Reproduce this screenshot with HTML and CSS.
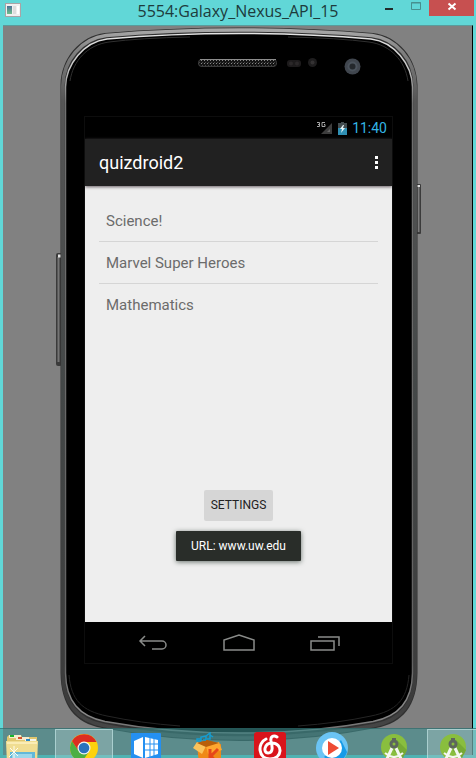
FILE: index.html
```html
<!DOCTYPE html>
<html lang="en">
<head>
<meta charset="utf-8">
<meta name="viewport" content="width=device-width, initial-scale=1">
<title>5554:Galaxy_Nexus_API_15</title>
<link rel="stylesheet" href="styles.css">
</head>
<body>
<header class="titlebar">
  <svg class="app-icon" width="16" height="14" viewBox="0 0 16 14" aria-hidden="true">
    <defs><linearGradient id="pane" x1="0" y1="0" x2="0" y2="1"><stop offset="0" stop-color="#4a7196"/><stop offset="1" stop-color="#6fc08c"/></linearGradient></defs>
    <rect x=".5" y=".5" width="15" height="13" fill="#f0f0f0" stroke="#a9a3a6"/>
    <rect x="2" y="3" width="5" height="8" fill="url(#pane)"/>
    <rect x="8" y="3" width="3" height="8" fill="#ddd"/><rect x="12" y="3" width="2" height="8" fill="#fff"/>
  </svg>
  <h1 class="window-title">5554:Galaxy_Nexus_API_15</h1>
  <div class="window-controls">
    <button class="control" aria-label="Minimize"><svg width="10" height="16" viewBox="0 0 10 16"><path d="M1 9h8" stroke="#222b2b" stroke-width="2"/></svg></button>
    <button class="control" aria-label="Maximize"><svg width="10" height="16" viewBox="0 0 10 16"><path d="M.5 2.500h9v7h-9zM0 3h10" fill="none" stroke="#47908f"/></svg></button>
    <button class="control control-close" aria-label="Close"><svg width="10" height="16" viewBox="0 0 10 16"><path d="M1.500 3.500l7 6M8.500 3.500l-7 6" stroke="#fff" stroke-width="2"/></svg></button>
  </div>
</header>

<main class="stage">
  <div class="phone">
    <svg class="phone-body" width="366" height="716" viewBox="56 26 366 716" aria-hidden="true">
      <defs>
        <linearGradient id="rim" x1="0" y1="0" x2="0" y2="1">
          <stop offset="0" stop-color="#a8a8a8"/><stop offset=".03" stop-color="#808080"/><stop offset=".1" stop-color="#565656"/><stop offset=".5" stop-color="#444848"/><stop offset=".95" stop-color="#3c3c3c"/><stop offset="1" stop-color="#4a4a4a"/>
        </linearGradient>
        <linearGradient id="shine" x1="0" y1="0" x2="0" y2="1">
          <stop offset="0" stop-color="#e4e4e4"/><stop offset=".05" stop-color="#c4c4c4"/><stop offset=".1" stop-color="#707070"/><stop offset=".9" stop-color="#626262"/><stop offset=".97" stop-color="#8c8c8c"/><stop offset="1" stop-color="#6c6c6c"/>
        </linearGradient>
        <pattern id="mesh" width="3" height="3" patternUnits="userSpaceOnUse"><rect width="3" height="3" fill="#151515"/><rect width="1" height="1" fill="#888"/><rect x="1" y="2" width="1" height="1" fill="#444"/></pattern>
      </defs>
      <rect x="56" y="253" width="6" height="113" rx="2" fill="#3b3b3b"/><path d="M58.500 257v105" stroke="#757575" stroke-width="2"/><path d="M58 256h3" stroke="#e4e4e4" stroke-width="3"/>
      <rect x="414" y="184" width="7" height="50" rx="1" fill="#3b3b3b"/><path d="M418.500 187v45" stroke="#7c7c7c" stroke-width="2"/><path d="M417 186h3" stroke="#ddd" stroke-width="2"/>
      <path d="M60.500 85C61 58 80 36 105 33Q170 27.500 239 27.500T373 33C398 36 417 58 417.500 85V673C417 706 403 723 376 728Q310 741 239 741T102 728C75 723 61 706 60.500 673Z" fill="#303030"/>
      <path d="M62.800 86C63 60 82 38.500 106 35.500Q170 30 239 30T372 35.500C396 38.500 415 60 415.200 86V673C415 704 401 720.500 374 725.500Q310 738 239 738T104 725.500C77 720.500 63 704 62.800 673Z" fill="none" stroke="url(#rim)" stroke-width="3.500"/>
      <path d="M65.500 87C66 64 84 42 107 39Q170 33.500 239 33.500T371 39C394 42 412 64 412.500 87V673C412 701 399 716 373 721.500Q310 733 239 733T105 721.500C79 716 66 701 65.500 673Z" fill="#000" stroke="url(#shine)" stroke-width="1.500"/>
      <path d="M70 81C73 61 87 45 109 42Q140 38 190 37M408 81C405 61 391 45 369 42Q338 38 288 37" fill="none" stroke="#303030"/>
      <path d="M69 675C71 700 82 711 107 716Q140 723 180 726M409 675C407 700 396 711 371 716Q338 723 298 726" fill="none" stroke="#252525"/>
      <rect x="198.500" y="59.500" width="78" height="7" rx="3" fill="url(#mesh)" stroke="#3c3c3c"/><path d="M200 59.500h76" stroke="#8c8c8c"/>
      <rect x="287" y="60" width="14" height="7" rx="3" fill="#1d1b1c"/><circle cx="291" cy="63.500" r="2" fill="#2b2829"/><circle cx="297" cy="63.500" r="2" fill="#2b2829"/>
      <circle cx="312.500" cy="62.500" r="4.500" fill="#1e1d1e"/><circle cx="312.500" cy="62.500" r="2" fill="#343233"/>
      <circle cx="352.500" cy="66.500" r="8" fill="#40464e"/><circle cx="352.500" cy="66.500" r="5" fill="#4b535c"/><circle cx="352.500" cy="66.500" r="3" fill="#24282c"/>
      <rect x="84.500" y="116.500" width="308" height="547" fill="#000" stroke="#0d0d0d"/>
    </svg>

    <section class="screen">
      <div class="statusbar">
        <svg width="16" height="14" viewBox="0 0 16 14" role="img" aria-label="3G signal">
          <path d="M4 13L15 2V13Z" fill="#3d3d3d"/><path d="M10 11l3-3v3z" fill="#666"/>
          <path d="M0 1.500h2.500v4H0M1 3.500h1.500M8 1.500H5v4h3v-2H7" fill="none" stroke="#a5a5a5"/>
        </svg>
        <svg width="9" height="14" viewBox="0 0 9 14" role="img" aria-label="Battery charging">
          <path d="M0 2h3V1h3v1h3v12H0z" fill="#424b4e"/><path d="M0 7h9v7H0z" fill="#2f8fb3"/><path d="M5 4L2 8h2l-1 4 4-5H5l1-3z" fill="#e4f3f6"/>
        </svg>
        <time class="clock">11:40</time>
      </div>
      <div class="appbar">
        <h2 class="app-title">quizdroid2</h2>
        <button class="overflow" aria-label="More options"><svg width="3" height="13" viewBox="0 0 3 13"><path d="M0 0h3v3H0zM0 5h3v3H0zM0 10h3v3H0z" fill="#fff"/></svg></button>
      </div>
      <div class="content">
        <ul class="topics">
          <li class="topic">Science!</li>
          <li class="topic">Marvel Super Heroes</li>
          <li class="topic">Mathematics</li>
        </ul>
        <button class="settings">SETTINGS</button>
        <div class="toast" role="status">URL: www.uw.edu</div>
      </div>
      <nav class="navbar">
        <button class="nav-button" aria-label="Back"><svg width="30" height="18" viewBox="0 0 30 18"><path d="M7 2L2 7l5 5M2 7h22a4 4 0 0 1 0 8H14" fill="none" stroke="#8a8c8a" stroke-width="1.500"/></svg></button>
        <button class="nav-button" aria-label="Home"><svg width="32" height="18" viewBox="0 0 32 18"><path d="M1 16V6L16 1l15 5v10z" fill="none" stroke="#8a8c8a" stroke-width="1.500"/></svg></button>
        <button class="nav-button" aria-label="Recent apps"><svg width="30" height="18" viewBox="0 0 30 18"><path d="M1 7h23v9H1zM8 3h21v9" fill="none" stroke="#8a8c8a" stroke-width="1.500"/></svg></button>
      </nav>
    </section>
  </div>
</main>

<nav class="taskbar" aria-label="Taskbar">
  <button class="task" aria-label="File Explorer"><svg width="32" height="32" viewBox="0 0 32 32">
    <path d="M1 5l2-2h12l1 2h15v27H1z" fill="#e0c66e"/><path d="M3 3h12v3H3z" fill="#f5eccd"/><path d="M4 3h4v2H4z" fill="#18b52b"/><path d="M10 5h13v3H10z" fill="#f5eccd"/><path d="M12 5h4v2h-4z" fill="#d5532d"/><path d="M19 7h11v3H19z" fill="#f5f5ee"/><path d="M20 7h4v2h-4z" fill="#2887c6"/>
    <path d="M0 9h32l-1 23H1z" fill="#f0dd92"/><path d="M1 10h30v2H1z" fill="#faecb5"/><path d="M4 20h25v12H4z" fill="#62b8d9"/><path d="M6 22h20v4H6z" fill="#9bd7eb"/><path d="M8 14v12M4 16l8 8M12 16l-9 9" stroke="#fffdf0"/>
  </svg></button>
  <button class="task task-active" aria-label="Chrome"><svg width="32" height="32" viewBox="0 0 32 32">
    <circle cx="16" cy="16" r="14" fill="#fdd20c"/><path d="M4 9A14 14 0 0 0 14 30L22 18 10 18z" fill="#4caf43"/><path d="M4 9A14 14 0 0 1 28.500 10H16L10 18z" fill="#dc2d20"/><circle cx="16" cy="16" r="6.500" fill="#f4f4f2"/><circle cx="16" cy="16" r="5.300" fill="#2a73bd"/>
  </svg></button>
  <button class="task" aria-label="Virtual machine"><svg width="32" height="32" viewBox="0 0 32 32">
    <rect x="1" y="1" width="30" height="31" rx="1" fill="#2490f1"/><path d="M4 9l9-4v21l-9-4z" fill="#fff"/><path d="M15 5l13 3v14l-13 4z" fill="#fff"/><path d="M20 5v21M24 6v19M15 12h13M15 18h13" stroke="#2490f1"/>
  </svg></button>
  <button class="task" aria-label="Kuwo Music"><svg width="32" height="32" viewBox="0 0 32 32">
    <path d="M5 12l9 3 15-3v20H7z" fill="#ef8917"/><path d="M5 10l9 4-4 8-9-6z" fill="#fbc35b"/><path d="M14 14l13-4 3 8-14 4z" fill="#ffa72f"/><path d="M5 11l10-3 12 3-13 4z" fill="#b95f0a"/><path d="M18 17v14M26 17l-7 7 7 8" fill="none" stroke="#e6471a" stroke-width="3"/><path d="M9 9V5l5-1v4M9 9H5v-2h4M14 8h-3M14 4l4-3v6h-3M18 3l3 2" fill="none" stroke="#159ed2" stroke-width="1.500"/>
  </svg></button>
  <button class="task" aria-label="NetEase Music"><svg width="32" height="32" viewBox="0 0 32 32">
    <rect width="32" height="36" rx="3" fill="#d9141b"/><path d="M12 7C3 11 4 27 16 27c13 0 13-16 2-16-8 0-9 10-4 10 6 0 4-8 3-12-1-5 3-6 6-4" fill="none" stroke="#fff" stroke-width="3" stroke-linecap="round"/>
  </svg></button>
  <button class="task" aria-label="Media player"><svg width="32" height="32" viewBox="0 0 32 32">
    <circle cx="16" cy="16" r="16" fill="#6bc4f4"/><path d="M25 8L31 20Q28 30 17 32L8 25z" fill="#169be8"/><circle cx="16" cy="16" r="10" fill="#fff"/><path d="M12 9l11 7-11 7z" fill="#ee4c34"/>
  </svg></button>
  <button class="task" aria-label="Android Studio"><svg width="32" height="32" viewBox="0 0 32 32">
    <circle cx="16" cy="15" r="13" fill="#89be3e"/><path d="M19 8l10 10-4 8-9-7z" fill="#76a934"/><path d="M14 16L8 29M18 16l6 13" stroke="#f4f7f1" stroke-width="3"/><path d="M7 21q9 8 18 0" fill="none" stroke="#f4f7f1" stroke-width="2"/><path d="M14 6h4v4h-4z" fill="#5d665d"/><circle cx="16" cy="12" r="3" fill="none" stroke="#5d665d" stroke-width="3"/>
  </svg></button>
  <button class="task task-active task-last" aria-label="Android Studio, running"><svg width="32" height="32" viewBox="0 0 32 32">
    <circle cx="16" cy="15" r="13" fill="#89be3e"/><path d="M19 8l10 10-4 8-9-7z" fill="#76a934"/><path d="M14 16L8 29M18 16l6 13" stroke="#f4f7f1" stroke-width="3"/><path d="M7 21q9 8 18 0" fill="none" stroke="#f4f7f1" stroke-width="2"/><path d="M14 6h4v4h-4z" fill="#5d665d"/><circle cx="16" cy="12" r="3" fill="none" stroke="#5d665d" stroke-width="3"/>
  </svg></button>
</nav>
</body>
</html>
```
FILE: styles.css
```css
* {
  box-sizing: border-box;
}

body {
  margin: 0;
  height: 100vh;
  overflow: hidden;
  display: flex;
  flex-direction: column;
  background: #61d7d7;
  font-family: Roboto, "Liberation Sans", sans-serif;
}

button {
  border: 0;
  padding: 0;
  background: none;
  font: inherit;
}

svg {
  display: block;
}

/* Window chrome */
.titlebar {
  display: grid;
  grid-template-columns: 100px 1fr 100px;
  align-items: start;
  flex: none;
  height: 25px;
}

.app-icon {
  margin: 3px 0 0 5px;
}

.window-title {
  margin: 0;
  font: 400 16px/22px "Open Sans", "Noto Sans", sans-serif;
  text-align: center;
  white-space: nowrap;
  color: #1d3b3c;
}

.window-controls {
  display: flex;
  justify-content: flex-end;
  padding-right: 2px;
}

.control {
  display: grid;
  place-items: center;
  width: 27px;
  height: 16px;
}

.control-close {
  width: 45px;
  background: #c75050;
}

.stage {
  flex: 1;
  min-height: 0;
  display: flex;
  justify-content: center;
  margin: 0 3px 3px;
  padding-left: 3px;
  border-top: 1px solid #5a9c9c;
  border-right: 1px solid #000;
  background: #818181;
}

/* Phone */
.phone {
  position: relative;
  flex: none;
  width: 366px;
  height: 716px;
  padding: 91px 30px 53px 29px;
}

.phone-body {
  position: absolute;
  inset: 0;
}

.screen {
  position: relative;
  display: flex;
  flex-direction: column;
  width: 100%;
  height: 546px;
  overflow: hidden;
}

.statusbar {
  display: flex;
  align-items: center;
  justify-content: flex-end;
  gap: 5px;
  flex: none;
  height: 22px;
  padding-right: 5px;
}

.clock {
  font-size: 14px;
  line-height: 22px;
  color: #33b5e5;
}

.appbar {
  position: relative;
  display: flex;
  align-items: center;
  justify-content: space-between;
  flex: none;
  height: 47px;
  padding: 0 14px;
  background: #212121;
  box-shadow: 0 1px 3px #685f65;
}

.app-title {
  margin: 0;
  font-size: 18px;
  line-height: 24px;
  font-weight: 400;
  color: #fff;
}

.content {
  flex: 1;
  display: flex;
  flex-direction: column;
  align-items: center;
  padding: 14px 14px 61px;
  background: #eee;
}

.topics {
  align-self: stretch;
  margin: 0 0 auto;
  padding: 0;
  list-style: none;
}

.topic {
  height: 42px;
  padding: 0 7px;
  border-bottom: 1px solid #d5d5d5;
  font-size: 15px;
  line-height: 43px;
  color: #6b6b6b;
}

.topic:last-child {
  border-bottom: 0;
}

.settings {
  width: 69px;
  height: 31px;
  margin-bottom: 10px;
  border-radius: 2px;
  background: #d6d6d6;
  font-size: 12px;
  line-height: 31px;
  color: #222;
}

.toast {
  padding: 0 15px;
  border-radius: 1px;
  background: #292d29;
  box-shadow: 0 1px 5px #66706a;
  font-size: 12px;
  line-height: 30px;
  color: #fff;
}

.navbar {
  display: flex;
  align-items: center;
  justify-content: center;
  gap: 2px;
  flex: none;
  height: 41px;
}

.nav-button {
  display: grid;
  place-items: center;
  width: 84px;
  height: 41px;
}

/* Desktop taskbar */
.taskbar {
  position: fixed;
  inset: auto 0 0;
  display: flex;
  gap: 4px;
  height: 30px;
  overflow: hidden;
  border-top: 1px solid rgba(35, 90, 90, .5);
  background: rgba(65, 149, 149, .57);
}

.task {
  display: flex;
  justify-content: center;
  align-items: flex-start;
  flex: none;
  width: 58px;
  height: 36px;
  padding-top: 3px;
}

.task:first-child {
  width: 51px;
  padding-right: 7px;
}

.task-active {
  padding-top: 2px;
  border: 1px solid rgba(190, 225, 225, .7);
  background: rgba(200, 220, 220, .3);
}

.task-last {
  width: 52px;
}
```
